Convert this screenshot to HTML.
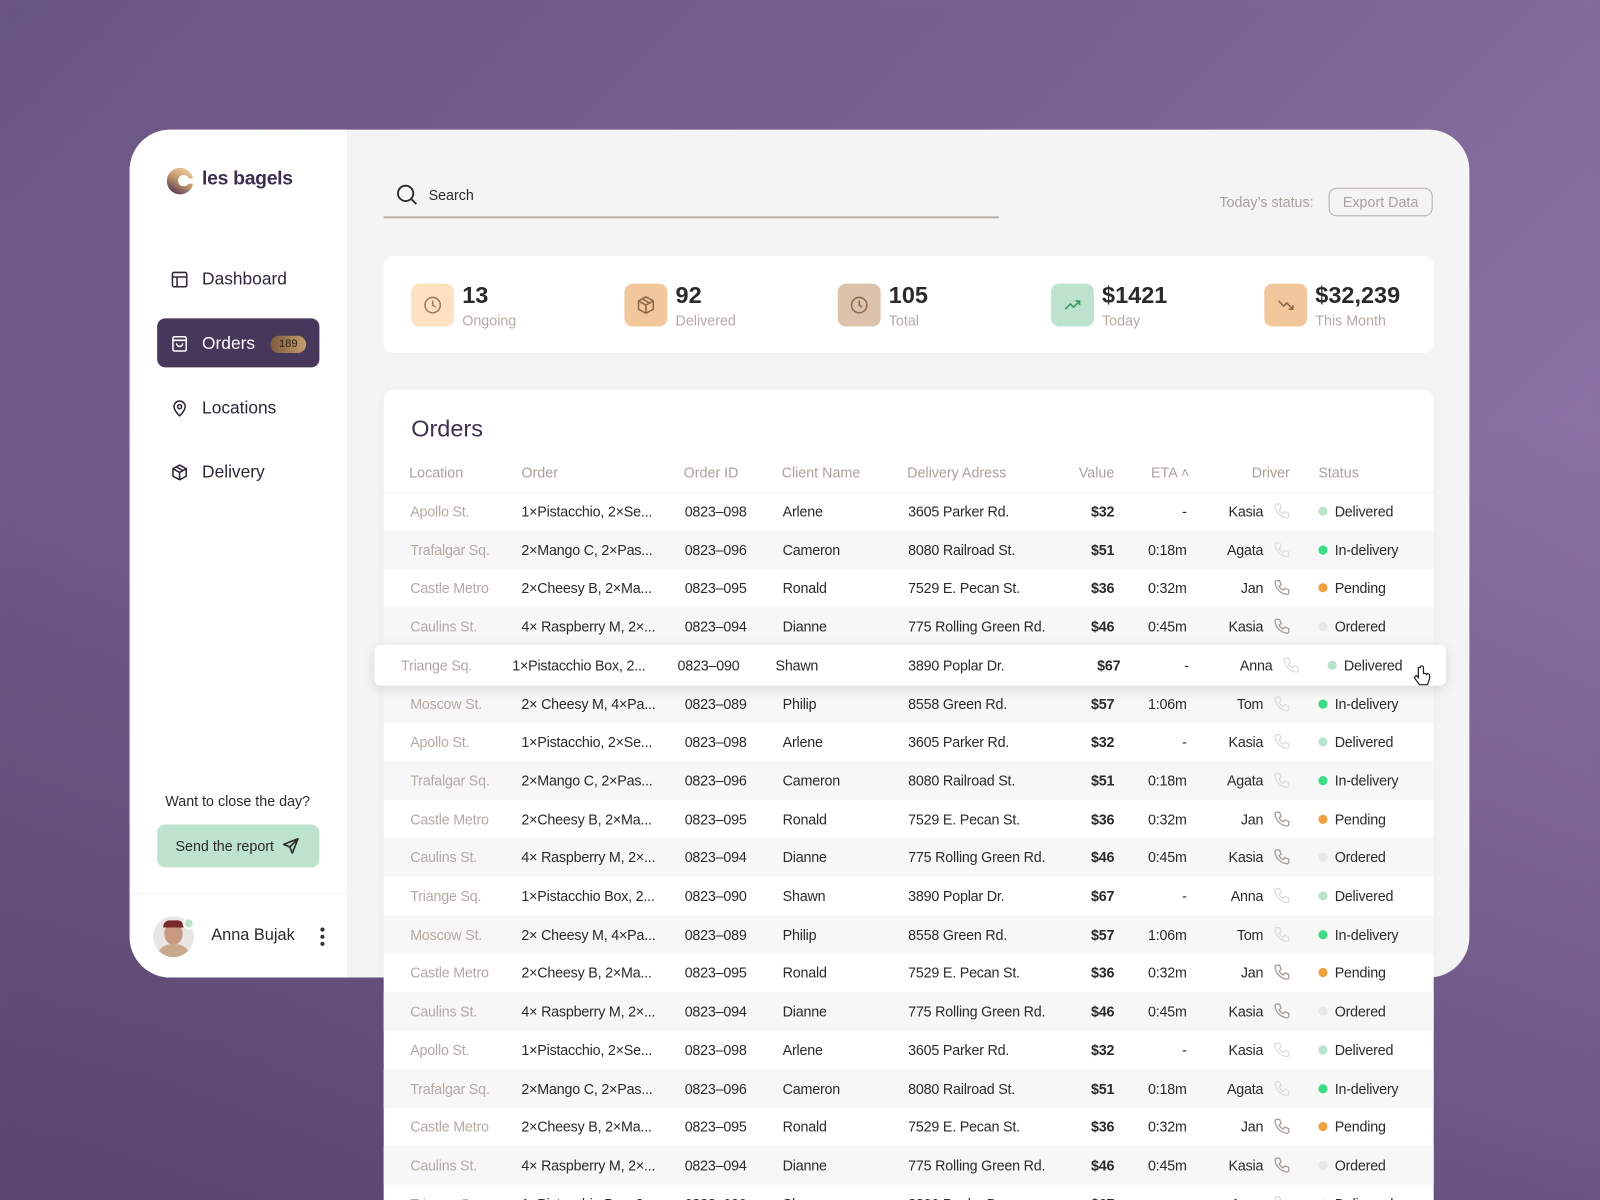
<!DOCTYPE html>
<html><head><meta charset="utf-8"><style>
*{margin:0;padding:0;box-sizing:border-box}
html,body{width:1600px;height:1200px;overflow:hidden}
body{background:linear-gradient(135deg,#6a5583 0%,#7b6494 45%,#9a7fb6 100%);font-family:"Liberation Sans",sans-serif;position:relative}
#bg2{position:absolute;inset:0;background:linear-gradient(180deg,rgba(0,0,0,0) 35%,rgba(40,22,55,.4) 100%)}
#w{position:absolute;left:0;top:0;width:1568px;height:1176px;transform:scale(1.020408);transform-origin:0 0}
.a{position:absolute;white-space:nowrap}
#card{position:absolute;left:127px;top:127px;width:1313px;height:831px;border-radius:40px;background:#f4f4f4;overflow:hidden}
#side{position:absolute;left:0;top:0;width:213px;height:831px;background:#fff}
.nav{position:absolute;left:71px;font-size:17px;color:#2e2635;transform:translateY(-50%)}
.ni{position:absolute;left:40px;transform:translateY(-50%)}
#tbl{position:absolute;left:376px;top:382px;width:1029px;height:820px;background:#fff;border-radius:10px 10px 0 0;box-shadow:0 2px 10px rgba(0,0,0,.04)}
.r{position:absolute;left:0;width:1029px;height:38px;font-size:14px;color:#2a2a2a;letter-spacing:-.2px}
.r.s{background:#f7f7f7}
.r span,.r svg{position:absolute;top:50%;transform:translateY(-50%);white-space:nowrap}
.l{left:26px;color:#b3aaa3}.o{left:135px}.i{left:295px}.c{left:391px}.d{left:514px}
.v{left:656px;width:60px;text-align:right;font-weight:bold}
.e{left:727px;width:60px;text-align:right}
.dr{left:782px;width:80px;text-align:right}
.p{left:871px;width:18px;height:18px}
.dot{left:916px;width:9px;height:9px;border-radius:50%}
.st{left:932px}
.h{position:absolute;top:81px;transform:translateY(-50%);font-size:14px;color:#aaa19a}
.si{position:absolute;top:27px;width:42px;height:42px;border-radius:8px}
.sn{position:absolute;top:25px;font-size:23px;font-weight:bold;color:#2a2a2a}
.sl{position:absolute;top:55px;font-size:14px;color:#b3aaa3}
</style></head><body><div id="bg2"></div>
<div id="w">
<div id="card">
 <div id="side">
  <svg class="a" style="left:36px;top:37px" width="27" height="27" viewBox="0 0 27 27"><defs><linearGradient id="g" x1="0.8" y1="0" x2="0.2" y2="1"><stop offset="0" stop-color="#f2cfa2"/><stop offset="0.5" stop-color="#c2956a"/><stop offset="1" stop-color="#4a3452"/></linearGradient></defs><circle cx="13.5" cy="13.5" r="13" fill="url(#g)"/><circle cx="17" cy="13" r="5.5" fill="#fff"/><rect x="17" y="11" width="10" height="5" fill="#fff"/></svg>
  <div class="a" style="left:71px;top:38px;font-size:19px;font-weight:bold;color:#3d2f4f;letter-spacing:-.3px">les bagels</div>
  <svg class="ni" style="top:147px" width="18" height="18" viewBox="0 0 18 18" fill="none" stroke="#2e2635" stroke-width="1.5"><rect x="2" y="2" width="14" height="14" rx="1.5"/><path d="M2 6.5h14M6.5 6.5V16"/></svg>
  <div class="nav" style="top:147px">Dashboard</div>
  <div class="a" style="left:27px;top:185px;width:159px;height:48px;border-radius:8px;background:#47375a"></div>
  <svg class="ni" style="top:210px" width="18" height="18" viewBox="0 0 18 18" fill="none" stroke="#fff" stroke-width="1.5"><rect x="2.5" y="2" width="13" height="14" rx="1.5"/><path d="M2.5 5.5h13M6 8.5a3 3 0 0 0 6 0"/></svg>
  <div class="nav" style="top:210px;color:#fff">Orders</div>
  <div class="a" style="left:138px;top:202px;width:35px;height:17px;border-radius:9px;background:linear-gradient(90deg,#7d5c3b,#c79d6d);color:#2a1f15;font-size:11px;text-align:center;line-height:17px">189</div>
  <svg class="ni" style="top:273px" width="18" height="18" viewBox="0 0 18 18" fill="none" stroke="#2e2635" stroke-width="1.5"><path d="M9 16.5s5.5-5 5.5-9a5.5 5.5 0 0 0-11 0c0 4 5.5 9 5.5 9z"/><circle cx="9" cy="7.5" r="2"/></svg>
  <div class="nav" style="top:273px">Locations</div>
  <svg class="ni" style="top:336px" width="18" height="18" viewBox="0 0 18 18" fill="none" stroke="#2e2635" stroke-width="1.5"><path d="M9 1.8l6.5 3.5v7.4L9 16.2 2.5 12.7V5.3z M2.5 5.3L9 9l6.5-3.7M9 9v7.2M5.7 3.5l6.6 3.7"/></svg>
  <div class="nav" style="top:336px">Delivery</div>
  <div class="a" style="left:35px;top:650px;font-size:14px;color:#2a2a2a">Want to close the day?</div>
  <div class="a" style="left:27px;top:681px;width:159px;height:42px;border-radius:8px;background:#bde3cf;font-size:14px;color:#2a2a2a;line-height:42px;padding-left:18px">Send the report</div>
  <svg class="a" style="left:149px;top:693px" width="18" height="18" viewBox="0 0 18 18" fill="none" stroke="#2a2a2a" stroke-width="1.6" stroke-linejoin="round"><path d="M16 2L2 7.5l6 2.5 2.5 6zM16 2L8 10"/></svg>
  <div class="a" style="left:0;top:748px;width:213px;height:1px;background:#f0f0f0"></div>
  <div class="a" style="left:23px;top:771px;width:40px;height:40px;border-radius:50%;background:#e8e6e4;overflow:hidden"><div style="position:absolute;left:11px;top:6px;width:18px;height:22px;border-radius:50%;background:#c89a82"></div><div style="position:absolute;left:5px;top:27px;width:30px;height:20px;border-radius:50%;background:#c9a98c"></div><div style="position:absolute;left:10px;top:4px;width:20px;height:7px;border-radius:6px 6px 0 0;background:#7a2a2a"></div></div>
  <div class="a" style="left:52px;top:772px;width:12px;height:12px;border-radius:50%;background:#bde3cf;border:2px solid #fff"></div>
  <div class="a" style="left:80px;top:781px;font-size:16px;color:#2a2a2a">Anna Bujak</div>
  <div class="a" style="left:187px;top:782px;width:4px;height:4px;border-radius:50%;background:#333;box-shadow:0 7px 0 #333,0 14px 0 #333"></div>
 </div>
 <svg class="a" style="left:261px;top:53px" width="22" height="22" viewBox="0 0 22 22" fill="none" stroke="#2a2a2a" stroke-width="1.8"><circle cx="9.5" cy="9.5" r="7.5"/><path d="M15 15l5 5"/></svg>
 <div class="a" style="left:293px;top:56px;font-size:14px;color:#2a2a2a">Search</div>
 <div class="a" style="left:249px;top:85px;width:603px;height:1.5px;background:#b8b0aa"></div>
 <div class="a" style="left:1068px;top:63px;font-size:14px;color:#aaa19a">Today’s status:</div>
 <div class="a" style="left:1175px;top:57px;width:102px;height:28px;border:1px solid #b8aea6;border-radius:8px;font-size:14px;color:#aaa19a;text-align:center;line-height:26px">Export Data</div>
 <div class="a" style="left:249px;top:124px;width:1029px;height:95px;background:#fff;border-radius:10px">
  <div class="si" style="left:27px;background:#fde1c0"></div><svg class="a" style="left:38px;top:38px" width="20" height="20" viewBox="0 0 20 20" fill="none" stroke="#9c7a5a" stroke-width="1.5"><circle cx="10" cy="10" r="7.5"/><path d="M10 5.5V10l3 2"/></svg>
  <div class="sn" style="left:77px">13</div><div class="sl" style="left:77px">Ongoing</div>
  <div class="si" style="left:236px;background:#f2c79b"></div><svg class="a" style="left:247px;top:38px" width="20" height="20" viewBox="0 0 18 18" fill="none" stroke="#8c6a4a" stroke-width="1.4"><path d="M9 1.8l6.5 3.5v7.4L9 16.2 2.5 12.7V5.3z M2.5 5.3L9 9l6.5-3.7M9 9v7.2M5.7 3.5l6.6 3.7"/></svg>
  <div class="sn" style="left:286px">92</div><div class="sl" style="left:286px">Delivered</div>
  <div class="si" style="left:445px;background:#dcc3ac"></div><svg class="a" style="left:456px;top:38px" width="20" height="20" viewBox="0 0 20 20" fill="none" stroke="#8c6a4a" stroke-width="1.5"><circle cx="10" cy="10" r="7.5"/><path d="M10 5.5V10l3 2"/></svg>
  <div class="sn" style="left:495px">105</div><div class="sl" style="left:495px">Total</div>
  <div class="si" style="left:654px;background:#bde3cf"></div><svg class="a" style="left:665px;top:38px" width="20" height="20" viewBox="0 0 20 20" fill="none" stroke="#3a9a60" stroke-width="1.6"><path d="M3 14l5-5 3 3 6-6M13 6h4v4"/></svg>
  <div class="sn" style="left:704px">$1421</div><div class="sl" style="left:704px">Today</div>
  <div class="si" style="left:863px;background:#f2c79b"></div><svg class="a" style="left:874px;top:38px" width="20" height="20" viewBox="0 0 20 20" fill="none" stroke="#8c6a4a" stroke-width="1.6"><path d="M3 6l5 5 3-3 6 6M13 14h4v-4"/></svg>
  <div class="sn" style="left:913px">$32,239</div><div class="sl" style="left:913px">This Month</div>
 </div>
</div>

<div id="tbl">
 <div class="a" style="left:27px;top:25px;font-size:23px;color:#3d2f4f">Orders</div>
 <div class="h" style="left:25px">Location</div><div class="h" style="left:135px">Order</div><div class="h" style="left:294px">Order ID</div><div class="h" style="left:390px">Client Name</div><div class="h" style="left:513px">Delivery Adress</div><div class="h" style="left:656px;width:60px;text-align:right">Value</div><div class="h" style="left:752px">ETA ˄</div><div class="h" style="left:808px;width:80px;text-align:right">Driver</div><div class="h" style="left:916px">Status</div>
 <div class="a" style="left:0;top:100px;width:1029px;height:1px;background:#efefef"></div>
 <div id="rows"></div>
</div>
<div class="a" style="left:367px;top:632px;width:1050px;height:40px;background:#fff;border-radius:6px;box-shadow:0 3px 12px rgba(0,0,0,.12)"></div>
<div class="r" style="left:367px;top:633px;width:1050px">
 <span class="l" style="left:26px">Triange Sq.</span><span class="o" style="left:135px">1×Pistacchio Box, 2...</span><span class="i" style="left:297px">0823–090</span><span class="c" style="left:393px">Shawn</span><span class="d" style="left:523px">3890 Poplar Dr.</span><span class="v" style="left:671px">$67</span><span class="e" style="left:738px">-</span><span class="dr" style="left:800px">Anna</span>
 <svg class="p" style="left:889px" viewBox="0 0 18 18" fill="none" stroke="#ddd" stroke-width="1.3"><path d="M4 2h3l1.5 4-2 1.5a9 9 0 0 0 4 4l1.5-2 4 1.5v3a1.5 1.5 0 0 1-1.5 1.5A13 13 0 0 1 2.5 3.5 1.5 1.5 0 0 1 4 2z"/></svg>
 <span class="dot" style="left:934px;background:#b9e3cc"></span><span class="st" style="left:950px">Delivered</span>
</div>
<svg class="a" style="left:1385px;top:652px" width="18" height="22" viewBox="0 0 18 22"><path d="M5 2v10l-2-2-2 2 5 7h8l2-6v-4l-2-1-1 1-1-1-2 0V2a1.5 1.5 0 0 0-3 0z" fill="#fff" stroke="#222" stroke-width="1.2"/></svg>
</div>
<script>
var D=[["Apollo St.","1×Pistacchio, 2×Se...","0823–098","Arlene","3605 Parker Rd.","$32","-","Kasia",0],
["Trafalgar Sq.","2×Mango C, 2×Pas...","0823–096","Cameron","8080 Railroad St.","$51","0:18m","Agata",1],
["Castle Metro","2×Cheesy B, 2×Ma...","0823–095","Ronald","7529 E. Pecan St.","$36","0:32m","Jan",2],
["Caulins St.","4× Raspberry M, 2×...","0823–094","Dianne","775 Rolling Green Rd.","$46","0:45m","Kasia",3],
["Triange Sq.","1×Pistacchio Box, 2...","0823–090","Shawn","3890 Poplar Dr.","$67","-","Anna",0],
["Moscow St.","2× Cheesy M, 4×Pa...","0823–089","Philip","8558 Green Rd.","$57","1:06m","Tom",1]];
var S=[["Delivered","#b9e3cc","#ddd"],["In-delivery","#3ddc84","#ddd"],["Pending","#f0a040","#a89e96"],["Ordered","#e8e8e8","#a89e96"]];
var seq=[0,1,2,3,-1,5,0,1,2,3,4,5,2,3,0,1,2,3,4];
var h="";
for(var k=0;k<seq.length;k++){var t=119+k*37.7-19;if(seq[k]<0){continue}var d=D[seq[k]],s=S[d[8]];
h+='<div class="r'+(k%2?' s':'')+'" style="top:'+t+'px"><span class="l">'+d[0]+'</span><span class="o">'+d[1]+'</span><span class="i">'+d[2]+'</span><span class="c">'+d[3]+'</span><span class="d">'+d[4]+'</span><span class="v">'+d[5]+'</span><span class="e">'+d[6]+'</span><span class="dr">'+d[7]+'</span><svg class="p" viewBox="0 0 18 18" fill="none" stroke="'+s[2]+'" stroke-width="1.3"><path d="M4 2h3l1.5 4-2 1.5a9 9 0 0 0 4 4l1.5-2 4 1.5v3a1.5 1.5 0 0 1-1.5 1.5A13 13 0 0 1 2.5 3.5 1.5 1.5 0 0 1 4 2z"/></svg><span class="dot" style="background:'+s[1]+'"></span><span class="st">'+s[0]+'</span></div>';}
document.getElementById("rows").innerHTML=h;
</script>
</body></html>
